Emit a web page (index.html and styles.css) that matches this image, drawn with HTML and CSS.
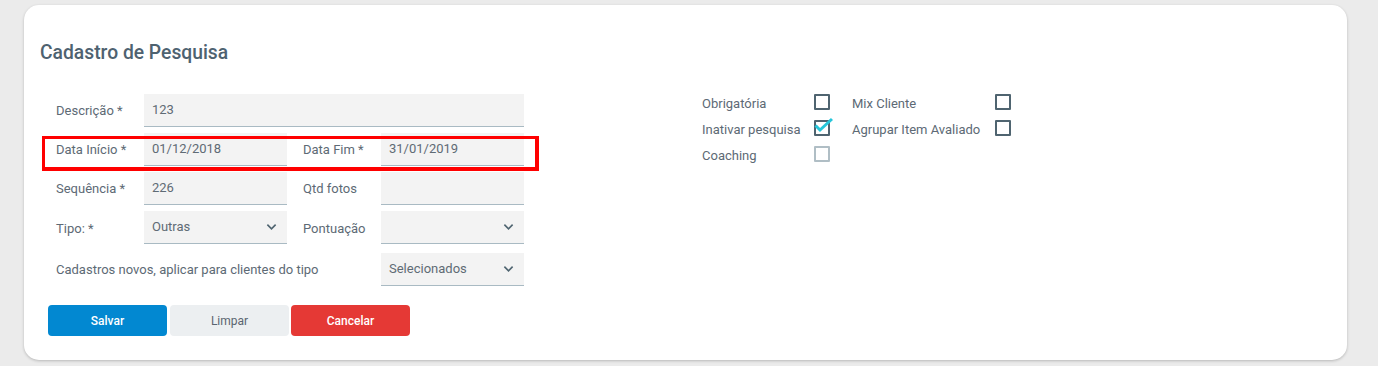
FILE: index.html
```html
<!DOCTYPE html>
<html lang="pt-BR">
<head>
    <meta charset="UTF-8">
    <meta name="viewport" content="width=device-width, initial-scale=1.0">
    <title>Cadastro de Pesquisa</title>
    <link rel="stylesheet" href="styles.css">
</head>
<body>
    <div class="card">
        <h2 class="card-title">Cadastro de Pesquisa</h2>
        <div class="card-body">
            <div class="form-main">
                <div class="form-grid">
                    <label class="lbl">Descrição *</label>
                    <div class="field span-3">123</div>

                    <label class="lbl highlight-row">Data Início *<span class="highlight"></span></label>
                    <div class="field">01/12/2018</div>
                    <label class="lbl lbl-right">Data Fim *</label>
                    <div class="field">31/01/2019</div>

                    <label class="lbl">Sequência *</label>
                    <div class="field">226</div>
                    <label class="lbl lbl-right">Qtd fotos</label>
                    <div class="field"></div>

                    <label class="lbl lbl-low">Tipo: *</label>
                    <div class="field select"><span>Outras</span>
                        <svg class="chevron" viewBox="0 0 12 8"><path d="M1.5 1.5 6 6l4.5-4.5"/></svg>
                    </div>
                    <label class="lbl lbl-right lbl-low">Pontuação</label>
                    <div class="field select"><span></span>
                        <svg class="chevron" viewBox="0 0 12 8"><path d="M1.5 1.5 6 6l4.5-4.5"/></svg>
                    </div>

                    <label class="lbl span-3 last">Cadastros novos, aplicar para clientes do tipo</label>
                    <div class="field select last"><span>Selecionados</span>
                        <svg class="chevron" viewBox="0 0 12 8"><path d="M1.5 1.5 6 6l4.5-4.5"/></svg>
                    </div>
                </div>

                <div class="actions">
                    <button class="btn btn-save">Salvar</button>
                    <button class="btn btn-clear">Limpar</button>
                    <button class="btn btn-cancel">Cancelar</button>
                </div>
            </div>

            <div class="flags">
                <span class="flag-lbl">Obrigatória</span>
                <span class="check"></span>
                <span class="flag-lbl">Mix Cliente</span>
                <span class="check"></span>

                <span class="flag-lbl">Inativar pesquisa</span>
                <span class="check checked">
                    <svg class="tick" viewBox="0 0 20 16"><path d="M1.5 8.5 6 13 18 2"/></svg>
                </span>
                <span class="flag-lbl">Agrupar Item Avaliado</span>
                <span class="check"></span>

                <span class="flag-lbl">Coaching</span>
                <span class="check disabled"></span>
            </div>
        </div>
    </div>
</body>
</html>
```

FILE: styles.css
```css
body {
    margin: 0;
    padding: 5px 31px 6px 24px;
    background: #ebebeb;
    font-family: Roboto, "Liberation Sans", Arial, sans-serif;
    color: #5d6a75;
}
.card {
    background: #fff;
    border-radius: 15px;
    box-shadow: 0 1px 3px rgba(0, 0, 0, 0.22);
    height: 355px;
    box-sizing: border-box;
    padding: 36px 16px 0 16px;
}
.card-title {
    margin: 0 0 29px 0;
    font-size: 19.3px;
    line-height: 24px;
    font-weight: 500;
    color: #4e6270;
}
.card-body {
    display: flex;
    gap: 178px;
}
.form-main {
    padding-left: 16px;
}
.form-grid {
    display: grid;
    grid-template-columns: 88px 143px 94px 143px;
    grid-template-rows: repeat(4, 33px) 36px;
    row-gap: 6px;
}
.lbl {
    font-size: 13px;
    line-height: 33px;
    white-space: nowrap;
}
.lbl-right {
    padding-left: 16px;
}
.lbl-low {
    padding-top: 3px;
    line-height: 30px;
}
.span-3 {
    grid-column: span 3;
}
.last {
    align-self: end;
}
.field {
    height: 33px;
    box-sizing: border-box;
    background: #f3f3f3;
    border-bottom: 1px solid #a9bac3;
    padding: 0 8px;
    font-size: 13px;
    line-height: 32px;
    color: #5f6b75;
}
.select {
    display: flex;
    align-items: center;
    justify-content: space-between;
    line-height: normal;
    padding-bottom: 3px;
}
.select span {
    padding-top: 1px;
}
.chevron {
    width: 11px;
    height: 8px;
    margin-right: 2px;
    margin-top: 3px;
    fill: none;
    stroke: #4f6470;
    stroke-width: 1.8;
}
.highlight-row {
    position: relative;
}
.highlight {
    position: absolute;
    left: -14px;
    top: 3px;
    width: 497px;
    height: 35px;
    box-sizing: border-box;
    border: 3px solid #ff0000;
    border-width: 3px 4px 4px 3px;
    pointer-events: none;
}
.actions {
    display: flex;
    gap: 2px;
    margin: 19px 0 0 -8px;
}
.btn {
    width: 119px;
    height: 31px;
    border: none;
    border-radius: 4px;
    font-family: Roboto, "Liberation Sans", Arial, sans-serif;
    font-size: 12px;
    font-weight: 500;
    cursor: pointer;
}
.btn-save { background: #0288d1; color: #fff; }
.btn-clear { background: #eceff1; color: #5a6570; font-weight: 400; margin-left: 1px; }
.btn-cancel { background: #e53935; color: #fff; }
.flags {
    display: grid;
    grid-template-columns: 112px 38px 143px 16px;
    grid-auto-rows: 26px;
    align-items: center;
    margin-top: -5px;
}
.flag-lbl {
    font-size: 13px;
    padding-top: 3px;
    white-space: nowrap;
}
.check {
    position: relative;
    display: block;
    width: 16px;
    height: 16px;
    box-sizing: border-box;
    border: 2px solid #4f6470;
    border-radius: 1px;
}
.check.disabled {
    border-color: #b0bec5;
}
.tick {
    position: absolute;
    left: -2px;
    top: -5px;
    width: 20px;
    height: 16px;
    fill: none;
    stroke: #26c6da;
    stroke-width: 3;
}
```
